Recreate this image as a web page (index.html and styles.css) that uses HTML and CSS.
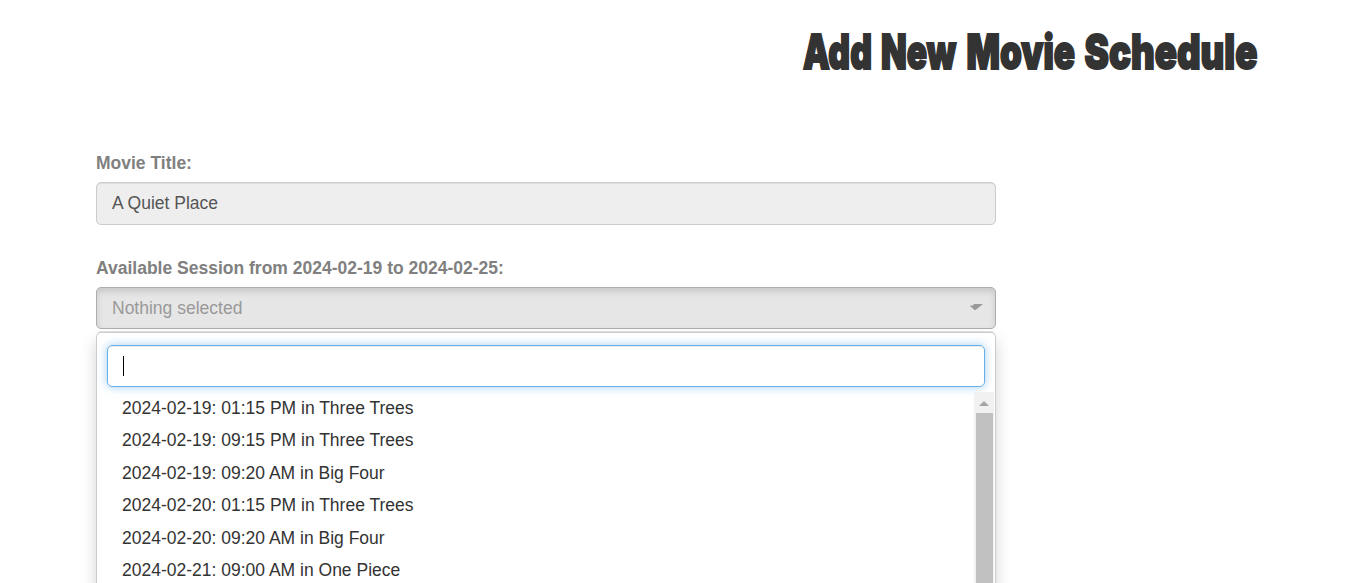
FILE: index.html
```
<!DOCTYPE html>
<html lang="en">
<head>
<meta charset="utf-8">
<title>Add New Movie Schedule</title>
<link rel="stylesheet" href="styles.css">
</head>
<body>
<main class="page">
  <h1 class="heading">
    <svg class="heading-art" width="460" height="56" viewBox="0 0 460 56" role="img">
      <text transform="translate(2 43.5) scale(.71 1)">Add</text>
      <text transform="translate(80 43.5) scale(.705 1)">New</text>
      <text transform="translate(165.5 43.5) scale(.737 1)">Movie</text>
      <text transform="translate(283.5 43.5) scale(.771 1)">Schedule</text>
    </svg>
  </h1>
  <form class="form">
    <label class="label">Movie Title:</label>
    <div class="control">A Quiet Place</div>
    <label class="label session-label">Available Session from 2024-02-19 to 2024-02-25:</label>
    <div class="picker">
      <span>Nothing selected</span>
      <svg class="picker-arrow" width="14" height="8" viewBox="0 0 14 8"><path d="M0 2.5H3.5V1H13L5.5 7H4.5L0 3Z"/></svg>
    </div>
    <div class="menu">
      <div class="search"><span class="cursor"></span></div>
      <div class="results">
        <ul class="options">
          <li>2024-02-19: 01:15 PM in Three Trees</li>
          <li>2024-02-19: 09:15 PM in Three Trees</li>
          <li>2024-02-19: 09:20 AM in Big Four</li>
          <li>2024-02-20: 01:15 PM in Three Trees</li>
          <li>2024-02-20: 09:20 AM in Big Four</li>
          <li>2024-02-21: 09:00 AM in One Piece</li>
        </ul>
        <div class="scrollbar">
          <svg width="10" height="5" viewBox="0 0 10 5"><path d="M5 0L10 5H0Z"/></svg>
          <div class="thumb"></div>
        </div>
      </div>
    </div>
  </form>
</main>
</body>
</html>
```
FILE: styles.css
```
* { box-sizing: border-box; }
body {
  margin: 0;
  background: #fff;
  color: #333;
  font: 17.5px/25px "Liberation Sans", Arial, sans-serif;
}
.page { height: 583px; overflow: hidden; padding: 25px 0 0 96px; }
.heading { margin: 0 0 0 705px; height: 125px; font-size: 46px; font-weight: 900; }
.heading-art { display: block; overflow: visible; }
.heading-art text {
  font-family: Inter, Roboto, sans-serif;
  font-size: 47.5px;
  font-weight: 900;
  fill: #333;
  stroke: #333;
  stroke-width: 2px;
}
.form { width: 900px; }
.label { display: block; height: 32px; padding-top: 1px; color: #808080; font-weight: bold; }
.session-label { margin-top: 30px; }
.control, .picker {
  height: 43px;
  padding: 8px 15px;
  border: 1px solid #ccc;
  border-radius: 5px;
  background: #eee;
  color: #555;
  box-shadow: inset 0 1px 1px rgba(0, 0, 0, .075);
}
.picker {
  display: flex;
  justify-content: space-between;
  height: 42px;
  padding-right: 11px;
  border-color: #adadad;
  background: #e6e6e6;
  color: #999;
  box-shadow: inset 0 4px 6px rgba(0, 0, 0, .125);
}
.picker-arrow { margin-top: 7px; fill: #999; }
.menu {
  height: 400px;
  margin-top: 3px;
  padding: 12px 1px 0 10px;
  border: 1px solid #ccc;
  border-radius: 5px;
  box-shadow: 0 -2px 0 -1px #e0e0e0, 0 8px 15px rgba(0, 0, 0, .175);
}
.search {
  width: 878px;
  height: 42px;
  padding: 10px 15px;
  border: 1px solid #66afe9;
  border-radius: 5px;
  box-shadow: inset 0 1px 1px rgba(0, 0, 0, .075), 0 0 10px rgba(102, 175, 233, .6);
}
.cursor { display: block; width: 1px; height: 20px; background: #000; }
.results { display: flex; justify-content: space-between; margin-top: 5px; }
.options { margin: 0; padding: 0 0 0 15px; list-style: none; }
.options li { height: 32.5px; padding-top: 3.7px; }
.scrollbar { width: 20px; padding-top: 9px; background: #f1f1f1; }
.scrollbar svg { display: block; margin: 0 auto; fill: #a3a3a3; }
.thumb { width: 17px; height: 240px; margin: 7px 0 0 2px; background: #c1c1c1; }
```
